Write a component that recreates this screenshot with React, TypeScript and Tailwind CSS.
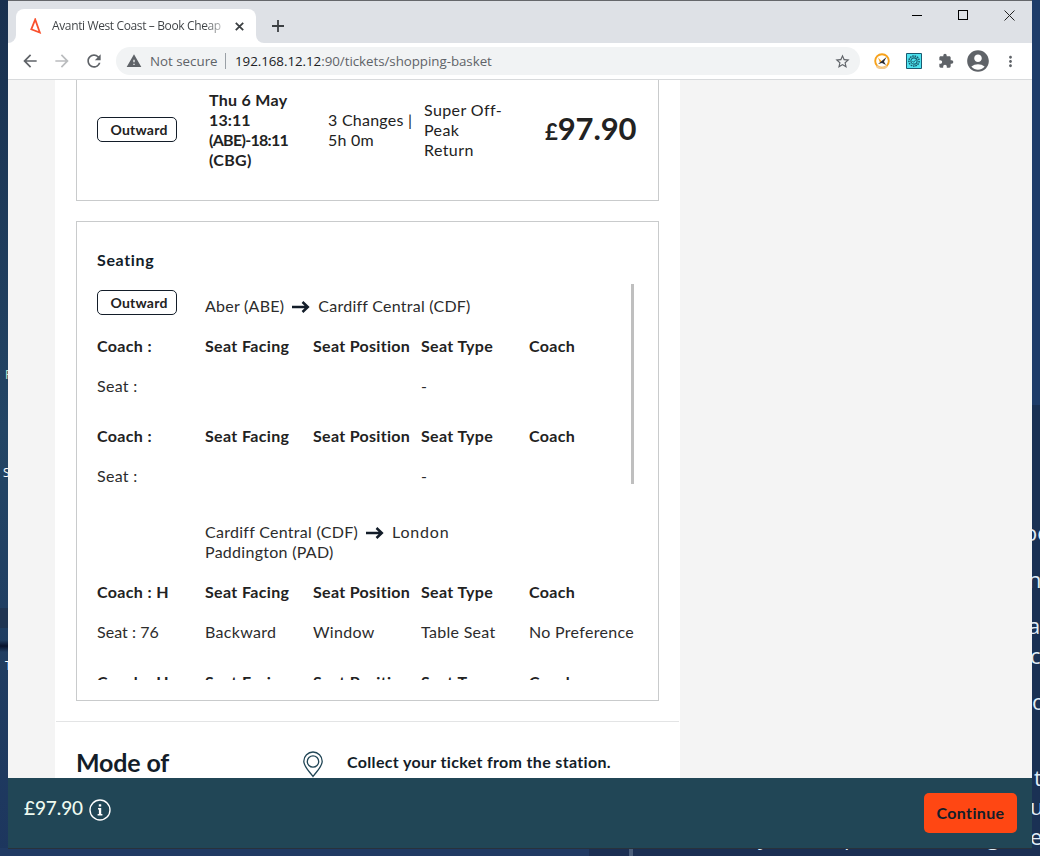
import React from "react";
import { MdArrowBack, MdArrowForward, MdRefresh, MdWarning, MdStarBorder, MdExtension, MdAccountCircle, MdMoreVert } from "react-icons/md";

const Arrow = () => (
  <svg className="mx-2 inline-block h-[12px] w-[18px] align-[-1px]" viewBox="0 0 18 12" fill="none" stroke="#131d29" strokeWidth="2.5">
    <path d="M0 6h16M10.5 1l5.3 5-5.3 5" />
  </svg>
);

const Badge = () => (
  <span className="flex h-[25px] w-20 items-center justify-center rounded-[5px] border border-[#131d29] pl-[4px] text-[14px] font-bold tracking-[0.22px]">
    Outward
  </span>
);

const Row = ({ cells, head }: { cells: string[]; head?: boolean }) => (
  <div
    className={
      head
        ? "grid h-5 grid-cols-[108px_108px_108px_108px_108px] whitespace-nowrap font-bold tracking-[0.35px]"
        : "grid h-5 grid-cols-[108px_108px_108px_108px_108px] whitespace-nowrap tracking-[0.3px] text-[#2c2c2c]"
    }
  >
    {cells.map((c, i) => (
      <span key={i} className={c === "Seat : 76" ? "tracking-[0.05px]" : c === "Seat Position" ? "tracking-[0.3px]" : undefined}>
        {c}
      </span>
    ))}
  </div>
);

const heads = (coach: string) => [coach, "Seat Facing", "Seat Position", "Seat Type", "Coach"];

const Tab = () => (
  <div className="flex h-[42px] shrink-0 items-end bg-[#dee1e6]">
    <div className="flex h-2 w-2 bg-white">
      <div className="h-2 w-2 rounded-br-lg bg-[#dee1e6]" />
    </div>
    <div className="flex h-[34px] w-[240px] items-center rounded-t-lg bg-white pl-[14px] font-['Open_Sans',sans-serif] text-[12px] text-[#3c4043]">
      <svg className="h-4 w-3 shrink-0" viewBox="0 0 12 16" fill="none" stroke="#f9512e" strokeWidth="1.8">
        <path d="M5.2 1.5L1.3 11.3l8.5 3.2z" />
      </svg>
      <span className="ml-[10px] w-[173px] overflow-hidden whitespace-nowrap bg-gradient-to-r from-[#3c4043] from-88% to-[#3c4043]/20 bg-clip-text tracking-[-0.37px] text-transparent">
        Avanti West Coast – Book Cheap
      </span>
      <svg className="ml-[10px] h-[9px] w-[9px]" viewBox="0 0 9 9" stroke="#3c4043" strokeWidth="1.8">
        <path d="M.8.8l7.4 7.4M8.2.8L.8 8.2" />
      </svg>
    </div>
    <div className="flex h-2 w-2 bg-white">
      <div className="h-2 w-2 rounded-bl-lg bg-[#dee1e6]" />
    </div>
    <svg className="mb-[11px] ml-2 h-3 w-3" viewBox="0 0 12 12" stroke="#3c4043" strokeWidth="1.8">
      <path d="M6 0v12M0 6h12" />
    </svg>
    <div className="mb-[22px] ml-auto mr-[17px] flex items-center gap-[35px]">
      <svg className="h-[11px] w-[11px]" viewBox="0 0 11 11" shapeRendering="crispEdges">
        <path d="M0 5.5h10" stroke="#000" />
      </svg>
      <svg className="h-[11px] w-[11px]" viewBox="0 0 11 11" fill="none" shapeRendering="crispEdges">
        <path d="M.5.5h9v9h-9z" stroke="#000" />
      </svg>
      <svg className="h-[11px] w-[11px]" viewBox="0 0 11 11" stroke="#222" strokeWidth="1">
        <path d="M.5.5l10 10M10.5.5l-10 10" />
      </svg>
    </div>
  </div>
);

const Toolbar = () => (
  <div className="flex h-[37px] shrink-0 items-center border-b border-[#d8dadc] bg-white text-[#5f6368]">
    <MdArrowBack className="ml-[12px] h-5 w-5" />
    <MdArrowForward className="ml-[12px] h-5 w-5 text-[#babcbe]" />
    <MdRefresh className="ml-[12px] h-5 w-5" />
    <div className="ml-[12px] flex h-7 w-[744px] items-center rounded-full bg-[#f1f3f4] pl-[10px] font-['Open_Sans',sans-serif] text-[13.33px]">
      <MdWarning className="h-4 w-4" />
      <span className="ml-2 w-[68px] whitespace-nowrap tracking-[0px]">Not secure</span>
      <span className="ml-[7px] h-4 w-px bg-[#9aa0a6]" />
      <span className="ml-[9px] whitespace-nowrap tracking-[-0.04px]">
        <span className="text-[#202124]">192.168.12.12</span>:90/tickets/shopping-basket
      </span>
      <MdStarBorder className="ml-auto mr-[9px] h-[17px] w-[17px]" />
    </div>
    <svg className="ml-[14px] h-4 w-4" viewBox="0 0 16 16" fill="none">
      <circle cx="8" cy="8" r="6.8" fill="#fff" stroke="#f7a21b" strokeWidth="1.9" />
      <path d="M2.5 13A7 7 0 0 0 13 13" stroke="#f4c98c" strokeWidth="2" />
      <path d="M4 4.5l4 4-2.2.8z" fill="#f7a21b" />
      <path d="M12.5 4L4 11l4-1 4 2-2-3.2z" fill="#2b2b33" />
    </svg>
    <svg className="ml-4 h-4 w-4" viewBox="0 0 16 16" fill="none">
      <path d="M.5.5h15v15H.5z" fill="#4de3ef" stroke="#1b5a70" />
      <circle cx="8" cy="8" r="5.1" stroke="#17596b" strokeWidth="1.5" strokeDasharray="1.6 .8" />
      <circle cx="8" cy="8" r="3.1" stroke="#17596b" strokeWidth="1.1" />
      <path d="M6.5 8l1 1.2L9.8 7" stroke="#17596b" />
    </svg>
    <MdExtension className="ml-4 h-4 w-4" />
    <MdAccountCircle className="ml-[11px] h-[26px] w-[26px]" />
    <MdMoreVert className="ml-[11px] h-[17px] w-[17px]" />
  </div>
);

const Fragment = ({ cls, children }: { cls: string; children: string }) => (
  <span className={"absolute whitespace-nowrap font-['Open_Sans',sans-serif] " + cls}>{children}</span>
);

export default function App() {
  return (
    <div className="relative h-[856px] w-[1040px] overflow-hidden bg-gradient-to-b from-[#19304f] via-[#234565] to-[#1d365e] pl-2 pr-2 font-['Lato',sans-serif] text-[16px] leading-5 text-[#222]">
      <div className="absolute right-0 top-0 h-[405px] w-2 bg-[#1e3c69]" />
      <div className="absolute right-0 top-[405px] h-[451px] w-2 bg-[#1a3154]" />
      <div className="absolute bottom-0 left-0 h-2 w-[589px] bg-[#203a63]" />
      <div className="absolute bottom-0 right-0 h-2 w-[451px] bg-[#1b2f53]" />
      <div className="absolute bottom-0 left-[629px] h-2 w-1 bg-[#4a5e7b]" />
      <div className="absolute left-0 top-[608px] h-5 w-2 bg-[#203552]" />
      <div className="absolute left-0 top-[640px] h-3 w-2 bg-gradient-to-b from-transparent via-[#08122c] to-transparent" />
      <Fragment cls="left-[5px] top-[365px] text-[12px] text-[#c9efd5]">P</Fragment>
      <Fragment cls="left-[3px] top-[463px] text-[12px] text-white">S</Fragment>
      <Fragment cls="left-[5px] top-[656px] text-[12px] text-white">T</Fragment>
      <Fragment cls="left-[1024px] top-[522px] text-[22px] text-[#e1edf7]">oo</Fragment>
      <Fragment cls="left-[1028px] top-[569px] text-[22px] text-[#e1edf7]">n</Fragment>
      <Fragment cls="left-[1028px] top-[615px] text-[22px] text-[#e1edf7]">at</Fragment>
      <Fragment cls="left-[1030px] top-[645px] text-[22px] text-[#e1edf7]">c</Fragment>
      <Fragment cls="left-[1032px] top-[691px] text-[22px] text-[#e1edf7]">o</Fragment>
      <Fragment cls="left-[1034px] top-[767px] text-[22px] text-[#e1edf7]">t</Fragment>
      <Fragment cls="left-[1030px] top-[796px] text-[22px] text-[#e1edf7]">u</Fragment>
      <Fragment cls="left-[1030px] top-[826px] text-[22px] text-[#e1edf7]">e</Fragment>
      <Fragment cls="left-[758px] top-[826px] text-[22px] text-[#e1edf7]">y</Fragment>
      <Fragment cls="left-[844px] top-[826px] text-[22px] text-[#e1edf7]">p</Fragment>
      <Fragment cls="left-[987px] top-[826px] text-[22px] text-[#e1edf7]">g</Fragment>

      <div className="relative flex h-[849px] w-[1024px] flex-col border-b border-t border-b-[#28323c] border-t-[#65676b] bg-white">
        <Tab />
        <Toolbar />
        <main className="min-h-0 flex-1 overflow-hidden bg-[#f4f4f4] pl-[47px]">
          <div className="h-full w-[625px] bg-white">
            <div className="ml-[21px] flex h-[121px] w-[583px] border border-t-0 border-[#c9cbcc] pl-5 pt-[10px] text-[#222]">
              <div className="w-[112px] pt-[27px]">
                <Badge />
              </div>
              <p className="w-[119px] whitespace-nowrap font-bold leading-5 tracking-[0.3px]">
                Thu 6 May
                <br />
                <span className="tracking-[0.1px]">13:11</span>
                <br />
                <span className="tracking-[-0.7px]">(ABE)-18:11</span>
                <br />
                (CBG)
              </p>
              <p className="w-[96px] whitespace-nowrap pt-5 tracking-[0.25px]">
                3 Changes |<br />
                5h 0m
              </p>
              <p className="w-[121px] pt-[10px] tracking-[0.4px]">
                Super Off-
                <br />
                Peak
                <br />
                Return
              </p>
              <p className="pt-[23px] text-[31px] font-bold leading-[30px] tracking-[-0.1px]">
                <span className="text-[22px]">£</span>97.90
              </p>
            </div>

            <section className="ml-[21px] mt-5 h-[480px] w-[583px] border border-[#c9cbcc] pl-5 pt-7">
              <h2 className="font-bold tracking-[0.65px] text-[#131d29]">Seating</h2>
              <div className="mt-[14px] flex h-[396px] w-[537px] overflow-hidden">
                <div className="w-[534px] shrink-0">
                  <div className="flex pt-[6px]">
                    <div className="w-[108px]">
                      <Badge />
                    </div>
                    <p className="pt-[6px] tracking-[0.25px] text-[#2c2c2c]">
                      Aber (ABE)
                      <Arrow />
                      Cardiff Central (CDF)
                    </p>
                  </div>
                  <div className="mt-5 flex flex-col gap-5">
                    <Row head cells={heads("Coach :")} />
                    <Row cells={["Seat :", "", "", "-"]} />
                  </div>
                  <div className="mt-[30px] flex flex-col gap-5">
                    <Row head cells={heads("Coach :")} />
                    <Row cells={["Seat :", "", "", "-"]} />
                  </div>
                  <p className="ml-[108px] mt-9 tracking-[0.28px] text-[#2c2c2c]">
                    Cardiff Central (CDF)
                    <Arrow />
                    <span className="tracking-[0.8px]">London</span>
                    <br />
                    Paddington (PAD)
                  </p>
                  <div className="mt-5 flex flex-col gap-5">
                    <Row head cells={heads("Coach : H")} />
                    <Row cells={["Seat : 76", "Backward", "Window", "Table Seat", "No Preference"]} />
                  </div>
                  <div className="mt-[30px]">
                    <Row head cells={heads("Coach : H")} />
                  </div>
                </div>
                <div className="h-[200px] w-[3px] shrink-0 bg-[#bfbfbf]" />
              </div>
            </section>

            <div className="ml-px mt-5 flex w-[623px] border-t border-[#e3e4e5] pl-5 pt-[25px] text-[#131d29]">
              <h2 className="w-[227px] text-[25px] font-bold leading-[30px] tracking-[-0.15px]">Mode of</h2>
              <svg className="mt-[4px] h-[27px] w-[20px]" viewBox="0 0 20 27" fill="none" stroke="#214656" strokeWidth="1.3">
                <path d="M10 25.5C7 21 .8 16 .8 10.2a9.2 9.2 0 0 1 18.4 0C19.2 16 13 21 10 25.5z" />
                <circle cx="10" cy="10.5" r="5.7" />
              </svg>
              <p className="ml-6 mt-[5px] font-bold tracking-[0.33px]">Collect your ticket from the station.</p>
            </div>
          </div>
        </main>
        <footer className="flex h-[70px] shrink-0 items-center bg-[#214656] pl-4 pr-[15px]">
          <span className="mb-[11px] w-[59px] text-[19px] font-medium leading-6 tracking-[-0.1px] text-[#eefaf0]">£97.90</span>
          <svg className="ml-[6px] mt-[-6px] h-[22px] w-[22px]" viewBox="0 0 22 22" fill="none">
            <circle cx="11" cy="11" r="10" stroke="#fff" strokeWidth="1.4" />
            <path d="M9.8 5.3h2.4v2.2H9.8zM9 9h3.2v6h1.2v1.5H8.6V15h1.3v-4.5H9z" fill="#fff" />
          </svg>
          <button className="ml-auto h-10 w-[93px] rounded-[5px] bg-[#ff4713] text-[16px] font-bold tracking-[0.35px] text-[#131d29]">
            Continue
          </button>
        </footer>
      </div>
    </div>
  );
}
